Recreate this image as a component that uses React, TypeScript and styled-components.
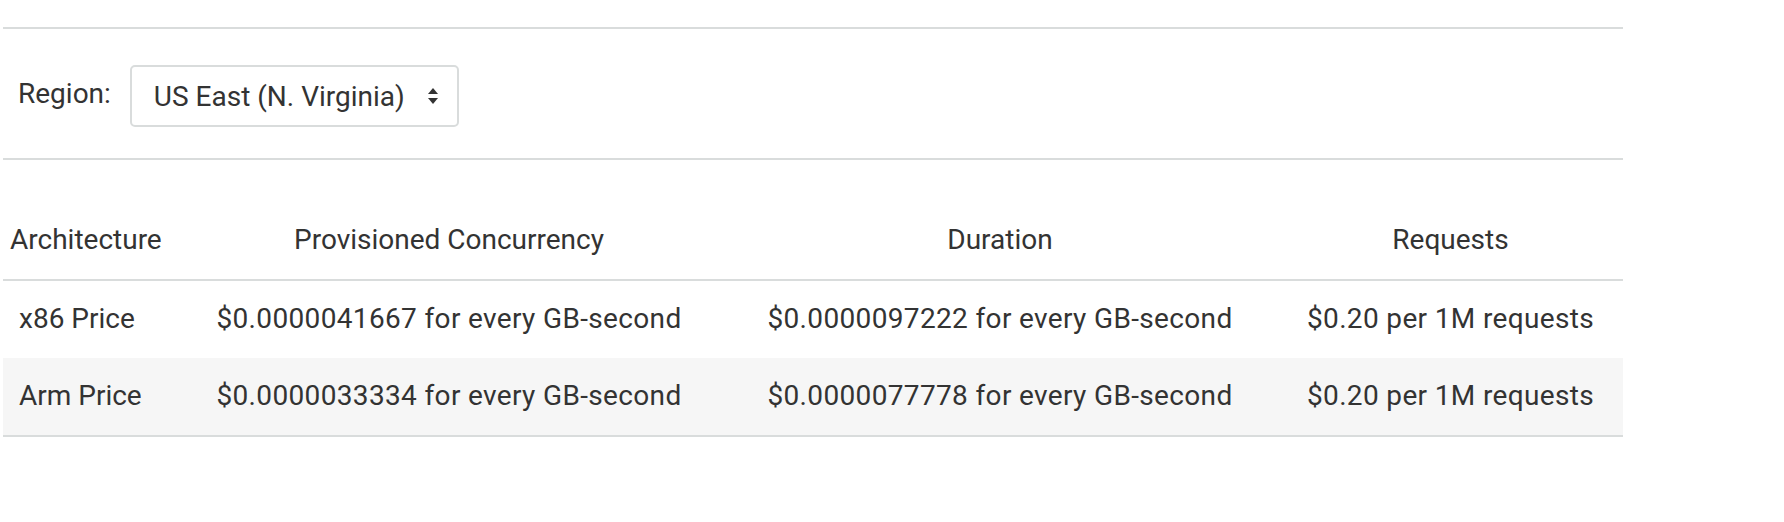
import React, { useState } from "react";
import styled, { createGlobalStyle } from "styled-components";

type PriceRow = {
  arch: string;
  provisioned: string;
  duration: string;
  requests: string;
};

const rows: PriceRow[] = [
  {
    arch: "x86 Price",
    provisioned: "$0.0000041667 for every GB-second",
    duration: "$0.0000097222 for every GB-second",
    requests: "$0.20 per 1M requests",
  },
  {
    arch: "Arm Price",
    provisioned: "$0.0000033334 for every GB-second",
    duration: "$0.0000077778 for every GB-second",
    requests: "$0.20 per 1M requests",
  },
];

export default function App() {
  const [region, setRegion] = useState("us-east-1");

  return (
    <>
      <GlobalStyle />
      <Page>
        <RegionBar>
          <RegionLabel htmlFor="region">Region:</RegionLabel>
          <SelectWrap>
            <RegionSelect
              id="region"
              value={region}
              onChange={(e) => setRegion(e.target.value)}
            >
              <option value="us-east-1">US East (N. Virginia)</option>
              <option value="us-east-2">US East (Ohio)</option>
              <option value="us-west-2">US West (Oregon)</option>
            </RegionSelect>
            <Caret width="10" height="16" viewBox="0 0 10 16" aria-hidden>
              <path d="M5 0 L10 6 H0 Z" fill="#333" />
              <path d="M5 16 L10 10 H0 Z" fill="#333" />
            </Caret>
          </SelectWrap>
        </RegionBar>

        <PriceTable>
          <thead>
            <tr>
              <HeadCell $width={166} $align="left">
                Architecture
              </HeadCell>
              <HeadCell $width={546}>Provisioned Concurrency</HeadCell>
              <HeadCell $width={556}>Duration</HeadCell>
              <HeadCell $width={345}>Requests</HeadCell>
            </tr>
          </thead>
          <tbody>
            {rows.map((row, i) => (
              <Row key={row.arch} $striped={i % 2 === 1}>
                <Cell $align="left">{row.arch}</Cell>
                <Cell>{row.provisioned}</Cell>
                <Cell>{row.duration}</Cell>
                <Cell>{row.requests}</Cell>
              </Row>
            ))}
          </tbody>
        </PriceTable>
      </Page>
    </>
  );
}

const GlobalStyle = createGlobalStyle`
  html, body {
    margin: 0;
    padding: 0;
    background: #fff;
  }
  body {
    font-family: Roboto, "Liberation Sans", Arial, sans-serif;
    color: #333;
  }
`;

const Page = styled.div`
  margin: 27px 0 0 3px;
  width: 1620px;
`;

const RegionBar = styled.div`
  display: flex;
  align-items: center;
  gap: 19px;
  padding: 36px 0 31px 15px;
  border-top: 2px solid #d9dcdc;
  border-bottom: 2px solid #d9dcdc;
`;

const RegionLabel = styled.label`
  font-size: 28px;
  color: #333;
  margin-top: -6px;
`;

const SelectWrap = styled.div`
  position: relative;
  display: inline-flex;
`;

const RegionSelect = styled.select`
  appearance: none;
  -webkit-appearance: none;
  box-sizing: border-box;
  width: 329px;
  height: 62px;
  padding: 0 50px 0 22px;
  font-family: Roboto, "Liberation Sans", Arial, sans-serif;
  font-size: 28px;
  color: #333;
  background: #fff;
  border: 2px solid #d9dcdc;
  border-radius: 5px;
  outline: none;
`;

const Caret = styled.svg`
  position: absolute;
  right: 21px;
  top: 23px;
  pointer-events: none;
`;

const PriceTable = styled.table`
  width: 1620px;
  margin-top: 40px;
  border-collapse: collapse;
  table-layout: fixed;
  font-size: 28px;
  color: #333;
`;

const HeadCell = styled.th<{ $width: number; $align?: "left" | "center" }>`
  width: ${(p) => p.$width}px;
  height: 79px;
  padding: 0 0 0 ${(p) => (p.$align === "left" ? "7px" : "0")};
  text-align: ${(p) => p.$align ?? "center"};
  font-weight: 400;
  vertical-align: middle;
  border-bottom: 2px solid #d9dcdc;
`;

const Row = styled.tr<{ $striped: boolean }>`
  background: ${(p) => (p.$striped ? "#f6f6f6" : "#fff")};

  &:last-child td {
    border-bottom: 2px solid #d9dcdc;
  }
`;

const Cell = styled.td<{ $align?: "left" | "center" }>`
  height: 74px;
  padding: 0 0 3px ${(p) => (p.$align === "left" ? "16px" : "0")};
  text-align: ${(p) => p.$align ?? "center"};
  vertical-align: middle;
  white-space: nowrap;
  letter-spacing: ${(p) => (p.$align === "left" ? "0" : "0.35px")};
`;
